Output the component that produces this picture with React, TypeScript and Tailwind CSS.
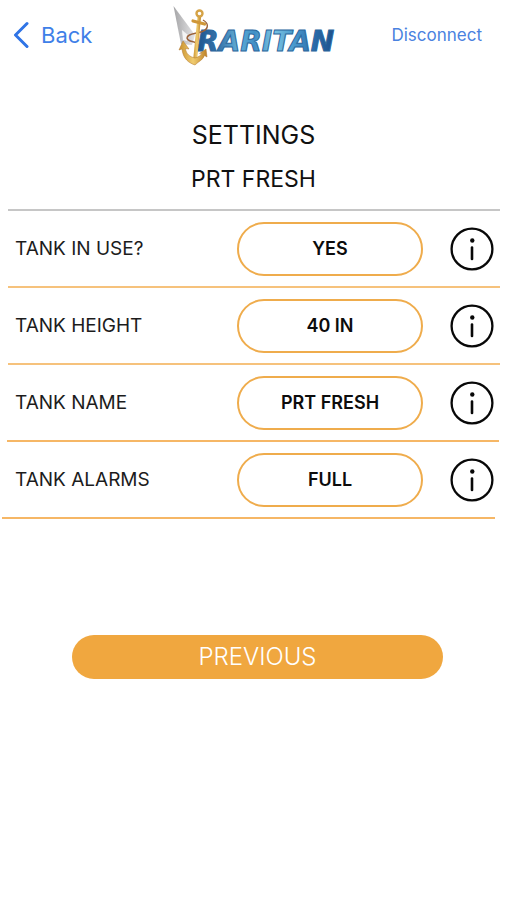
import React from "react";

type Setting = {
  label: string;
  value: string;
  line: string;
};

const settings: Setting[] = [
  { label: "TANK IN USE?", value: "YES", line: "ml-2 mr-[7px] border-t-2 border-[#f6c27c]" },
  { label: "TANK HEIGHT", value: "40 IN", line: "ml-2 mr-[7px] border-t-2 border-[#f6c27c]" },
  { label: "TANK NAME", value: "PRT FRESH", line: "ml-[7px] mr-2 border-t-2 border-[#f6b766]" },
  { label: "TANK ALARMS", value: "FULL", line: "ml-[2px] mr-3 border-t-2 border-[#f6b766]" },
];

function Logo() {
  return (
    <svg width="166" height="62" viewBox="0 0 166 62" role="img" aria-label="Raritan">
      <defs>
        <linearGradient id="sail" x1="0" y1="0" x2="1" y2="0">
          <stop offset="0" stopColor="#a4a4a6" />
          <stop offset="0.5" stopColor="#c6c6c8" />
          <stop offset="1" stopColor="#e4e4e6" />
        </linearGradient>
        <linearGradient id="gold" x1="0" y1="0" x2="1" y2="0">
          <stop offset="0" stopColor="#c8902c" />
          <stop offset="0.5" stopColor="#f0cc70" />
          <stop offset="1" stopColor="#bd8226" />
        </linearGradient>
        <linearGradient id="water" x1="0" y1="0" x2="1" y2="0">
          <stop offset="0" stopColor="#1d548e" />
          <stop offset="0.17" stopColor="#3878ae" />
          <stop offset="0.3" stopColor="#62aed6" />
          <stop offset="0.42" stopColor="#3f8fc6" />
          <stop offset="0.56" stopColor="#7cc4e2" />
          <stop offset="0.7" stopColor="#4a9bce" />
          <stop offset="0.85" stopColor="#2b6cab" />
          <stop offset="1" stopColor="#1d508a" />
        </linearGradient>
      </defs>
      <path d="M2.500 2 24 31 21 41 10 40Z" fill="url(#sail)" />
      <path d="M11 26 17 31 16 37 12 36Z" fill="#f4f4f4" />
      <text
        x="26"
        y="47"
        fontSize="28"
        fill="url(#water)"
        stroke="#2b669c"
        strokeWidth="1"
        className="font-['DejaVu_Sans',sans-serif] font-bold italic"
      >
        RARITAN
      </text>
      <path
        d="M32 16C39 20 37 26 30 28 23 30 16 30 16 34 17 39 25 36 27 41 28 45 24 48 25 52"
        fill="none"
        stroke="#9a6038"
        strokeWidth="1.400"
      />
      <path d="M26.500 13h3.500L26 57h-4Z" fill="url(#gold)" />
      <circle cx="28.500" cy="9.500" r="3" fill="none" stroke="#d5a347" strokeWidth="2.400" />
      <path d="M22 17 33.500 20" fill="none" stroke="#cf9738" strokeWidth="3.200" strokeLinecap="round" />
      <path
        d="M12 37 18 45 14.500 44.500C15 50 19 53 24 54 28 53 30 51 31 49L28.500 49.500 35 45 36 53 33.500 51.500C32 56 28 57 24 61 18 59 12 55 11 45L8 46Z"
        fill="url(#gold)"
        stroke="#b0752a"
        strokeWidth="0.500"
      />
    </svg>
  );
}

function InfoIcon() {
  return (
    <svg width="44" height="44" viewBox="0 0 44 44" fill="none" aria-hidden="true">
      <circle cx="22" cy="22" r="20.400" stroke="#080808" strokeWidth="2.300" />
      <circle cx="22.300" cy="13.500" r="2.200" fill="#080808" />
      <path d="M22 20.500V32" stroke="#080808" strokeWidth="2.600" strokeLinecap="round" />
    </svg>
  );
}

function SettingRow({ label, value, line }: Setting) {
  const id = label.toLowerCase().replace(/[^a-z]+/g, "-");
  return (
    <li>
      <div className="flex h-[75px] items-center pr-[13px] pl-[15px]">
        <span id={id} className="flex-1 text-[19px] leading-6 text-[#1c1c1c]">
          {label}
        </span>
        <button
          type="button"
          aria-describedby={id}
          className="h-[54px] w-[186px] rounded-full border-2 border-[#efac4c] text-[18px] leading-6 font-semibold text-[#0c0c0c]"
        >
          {value}
        </button>
        <button type="button" aria-label={`About ${label}`} className="ml-[27px]">
          <InfoIcon />
        </button>
      </div>
      <hr className={line} />
    </li>
  );
}

export default function App() {
  return (
    <div className="min-h-screen bg-white font-['Inter',sans-serif] text-[#111111]">
      <header className="grid grid-cols-[1fr_auto_1fr] items-center px-[13px] pt-1">
        <button type="button" className="flex items-center gap-3 justify-self-start text-[22px] leading-7 text-[#3f7fe8]">
          <svg width="16" height="28" viewBox="0 0 16 28" fill="none" aria-hidden="true">
            <path d="M14 2.500 2.500 14 14 25.500" stroke="#2f74e6" strokeWidth="3" strokeLinecap="round" strokeLinejoin="round" />
          </svg>
          Back
        </button>
        <Logo />
        <button type="button" className="mr-3 justify-self-end text-[17px] leading-6 text-[#4a82e0]">
          Disconnect
        </button>
      </header>
      <main>
        <div className="pt-[53px] text-center">
          <h1 className="text-[25px] leading-8">SETTINGS</h1>
          <h2 className="mt-3 text-[23px] leading-8">PRT FRESH</h2>
        </div>
        <hr className="mt-[14px] mr-[7px] ml-2 border-t-2 border-[#c6c6c6]" />
        <ul>
          {settings.map((s) => (
            <SettingRow key={s.label} {...s} />
          ))}
        </ul>
        <div className="mt-[116px] pr-16 pl-[72px]">
          <button
            type="button"
            className="h-11 w-full rounded-full bg-[#f0a73f] text-[24px] leading-8 font-light text-white"
          >
            PREVIOUS
          </button>
        </div>
      </main>
    </div>
  );
}
